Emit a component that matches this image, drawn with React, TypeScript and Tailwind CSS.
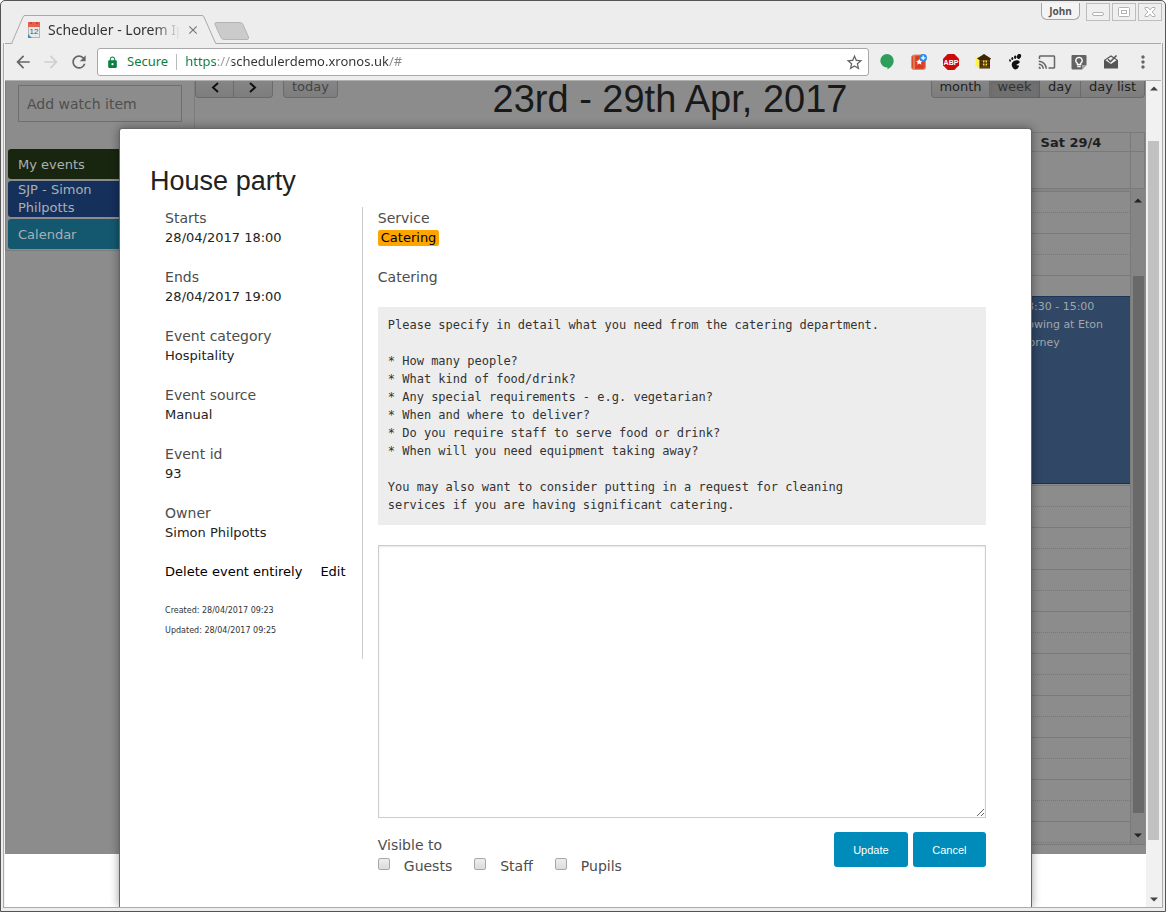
import type { ReactNode } from 'react';
import {
  MdArrowBack,
  MdArrowForward,
  MdCast,
  MdClose,
  MdLock,
  MdMoreVert,
  MdRefresh,
  MdStarBorder,
} from 'react-icons/md';

const CHROME_FONT = "font-['Noto_Sans',sans-serif]";
const BODY_FONT = "font-['DejaVu_Sans',sans-serif]";
const HEADING_FONT = "font-['Liberation_Sans',sans-serif]";

function CalendarFavicon() {
  return (
    <svg width="12" height="16" viewBox="0 0 12 16" aria-hidden="true">
      <rect x="0.5" y="0.5" width="11" height="15" fill="#e9e9e9" stroke="#b5b5b5" />
      <rect x="0" y="0" width="12" height="5" fill="#e8604c" />
      <path d="M3 0v2M9 0v2" stroke="#8f3a30" />
      <path d="M0 12l4 4H0z" fill="#3c8fb8" />
      <text x="6" y="12" fontSize="8" textAnchor="middle" fill="#555" fontFamily="Liberation Sans">
        12
      </text>
    </svg>
  );
}

function WindowButton({ label, children }: { label: string; children: ReactNode }) {
  return (
    <button aria-label={label} className="flex h-[18px] w-6 items-center justify-center border border-[#bdbdbd] bg-[#efefef]">
      <svg width="14" height="12" viewBox="0 0 14 12" fill="#fff" stroke="#b3b3b3" aria-hidden="true">
        {children}
      </svg>
    </button>
  );
}

function TitleBar() {
  return (
    <header className={`relative z-10 flex h-[42px] items-end pl-[9px] ${CHROME_FONT}`}>
      <div className="relative -mb-px flex h-[29px] w-[208px] items-center pl-[18px] text-sm text-[#333]">
        <svg className="absolute inset-0" width="208" height="29" viewBox="0 0 208 29" aria-hidden="true">
          <path
            d="M0 28.500Q1.500 28.500 2 27.500L13 2Q13.600 .5 15 .5H192Q193.500 .5 194 2L205 27Q205.700 28.500 207 28.500H208"
            fill="#eeeeee"
            stroke="#a9a9a9"
          />
          <path d="M3 28.500H205" stroke="#eeeeee" />
        </svg>
        <div className="relative flex w-full items-center">
          <CalendarFavicon />
          <span className="ml-2 w-[132px] overflow-hidden whitespace-nowrap [mask-image:linear-gradient(90deg,#000_80%,transparent)]">
            Scheduler - Lorem Ipsum
          </span>
          <button aria-label="Close tab" className="ml-1.5 text-[#777]">
            <MdClose size={14} />
          </button>
        </div>
      </div>
      <button aria-label="New tab" className="mb-[3px] -ml-1 self-end">
        <svg width="36" height="18" viewBox="0 0 36 18" aria-hidden="true">
          <path d="M2.500 .5H26Q28 .5 29 2.500L34.500 15Q35 17.500 33 17.500H10Q8 17.500 7 15.500L1 2.500Q.5 .5 2.500 .5Z" fill="#cbcbcb" stroke="#b4b4b4" />
        </svg>
      </button>
      <div className="ml-auto flex gap-[2px] self-start pt-[2px] pr-[3px]">
        <button className="mr-1 h-[17px] w-[39px] rounded-b-md border border-t-0 border-[#a5a5a5] bg-[#f4f4f4] text-[10px] leading-4 font-bold text-[#555]">
          John
        </button>
        <WindowButton label="Minimize">
          <rect x="1.500" y="6.500" width="11" height="3" rx="1.500" />
        </WindowButton>
        <WindowButton label="Maximize">
          <rect x="1.500" y="1.500" width="11" height="9" rx="1" />
          <rect x="4.500" y="4.500" width="5" height="3" />
        </WindowButton>
        <WindowButton label="Close">
          <path d="M2 1.500H5L7 4 9 1.500H12V3L9 6 12 9V10.500H9L7 8 5 10.500H2V9L5 6 2 3Z" />
        </WindowButton>
      </div>
    </header>
  );
}

function HangoutsIcon() {
  return (
    <svg width="16" height="18" viewBox="0 0 16 18" aria-hidden="true">
      <path d="M8 1a6.700 6.700 0 0 1 6.700 6.700C14.700 11.500 12 14 8.500 16.500V14.400H8A6.700 6.700 0 1 1 8 1Z" fill="#2f9e5b" />
    </svg>
  );
}

function BookmarkIcon() {
  return (
    <svg width="16" height="16" viewBox="0 0 16 16" aria-hidden="true">
      <rect x="0.500" y="1" width="14" height="14.500" rx="2.500" fill="#d9492c" stroke="#e88a63" />
      <path d="M3 1v14" stroke="#f0a183" />
      <rect x="5" y="2.500" width="7" height="11.500" fill="#d93a22" />
      <path d="M8.300 4.500l1 2.200 2.400.2-1.800 1.600.6 2.300-2.200-1.200-2.100 1.200.5-2.300L5 6.900l2.300-.2z" fill="#fff" />
      <circle cx="12.200" cy="3.800" r="3.800" fill="#2b87e8" />
      <path d="M12.200 1.500v4.600M9.900 3.800h4.600" stroke="#fff" strokeWidth="1.300" />
    </svg>
  );
}

function AdblockIcon() {
  return (
    <svg width="16" height="16" viewBox="0 0 16 16" aria-hidden="true">
      <path d="M4.700 0h6.600L16 4.700v6.600L11.300 16H4.700L0 11.300V4.700z" fill="#cc0a0a" />
      <text x="8" y="10.800" fontSize="7" fontWeight="700" textAnchor="middle" fill="#fff" fontFamily="Liberation Sans">
        ABP
      </text>
    </svg>
  );
}

function HouseIcon() {
  return (
    <svg width="16" height="16" viewBox="0 0 16 16" aria-hidden="true">
      <path d="M0 3l2 1 1-2 2 3v8l-3 1v-2l-2 1 1-4-1-2 1.500-1z" fill="#fff04a" />
      <path d="M9 0L2 4.500 4.500 6V14.500H15V6l1-1.500Z" fill="#3d2605" />
      <path d="M5.500 7h9M5.500 10h9M5.500 13h9" stroke="#8a5a14" />
      <rect x="8" y="6.500" width="4" height="5" fill="#f5e02c" />
      <path d="M10 6.500v5M8 9h4" stroke="#3d2605" />
    </svg>
  );
}

function GnomeIcon() {
  return (
    <svg width="14" height="16" viewBox="0 0 14 16" fill="#111" aria-hidden="true">
      <ellipse cx="11" cy="2.400" rx="2" ry="2.600" transform="rotate(25 11 2.400)" />
      <ellipse cx="7.200" cy="3.200" rx="1.200" ry="1.700" transform="rotate(10 7.200 3.200)" />
      <ellipse cx="4.300" cy="4.500" rx="1" ry="1.500" />
      <ellipse cx="2" cy="6.500" rx=".9" ry="1.300" transform="rotate(-15 2 6.500)" />
      <path d="M8.500 6.200C12 5.800 12.500 8.500 10.500 9.600 9 10.400 8 10.600 9 11.500c1.500-.8 2.500.2 1.500 1.800C8.800 16.500 5.500 15.800 4.200 12.800 2.800 9.500 4.500 6.600 8.500 6.200Z" />
    </svg>
  );
}

function KeepIcon() {
  return (
    <svg width="16" height="16" viewBox="0 0 16 16" aria-hidden="true">
      <path d="M1.500 1h13Q15.500 1 15.500 2v9l-4.500 4.500H1.500Q.5 15.500 .5 14.500V2Q.5 1 1.500 1Z" fill="#636363" />
      <path d="M15.500 11H11v4.500z" fill="#a3a3a3" />
      <path d="M8 3.300a3.200 3.200 0 0 1 1.700 5.900V10.500H6.300V9.200A3.200 3.200 0 0 1 8 3.300Z" fill="none" stroke="#fff" strokeWidth="1.300" />
      <path d="M6.300 12.500h3.400" stroke="#fff" strokeWidth="1.300" />
    </svg>
  );
}

function InboxIcon() {
  return (
    <svg width="16" height="16" viewBox="0 0 16 16" aria-hidden="true">
      <path d="M1 6L8 1.200 15 6v8.500H1z" fill="#555" />
      <path d="M2.500 6.200L8 2.800 13.500 6.200 8 10z" fill="#eee" />
      <path d="M5 5.300l2.400 2.400L13.500 1.500" fill="none" stroke="#555" strokeWidth="1.600" />
    </svg>
  );
}

const EXTENSIONS: { label: string; icon: ReactNode }[] = [
  { label: 'Hangouts', icon: <HangoutsIcon /> },
  { label: 'Save bookmark', icon: <BookmarkIcon /> },
  { label: 'Adblock Plus', icon: <AdblockIcon /> },
  { label: 'Home', icon: <HouseIcon /> },
  { label: 'GNOME Shell integration', icon: <GnomeIcon /> },
  { label: 'Cast', icon: <MdCast size={18} /> },
  { label: 'Keep', icon: <KeepIcon /> },
  { label: 'Inbox', icon: <InboxIcon /> },
  { label: 'Menu', icon: <MdMoreVert size={20} /> },
];

function Toolbar() {
  return (
    <nav className={`flex h-[38px] items-center border-t border-b border-t-[#a9a9a9] border-b-[#b0b0b0] bg-[#eeeeee] pr-[2px] pl-1 text-[#666] ${CHROME_FONT}`}>
      <button aria-label="Back" className="flex w-7 justify-center">
        <MdArrowBack size={20} />
      </button>
      <button aria-label="Forward" className="flex w-7 justify-center text-[#cfcfcf]">
        <MdArrowForward size={20} />
      </button>
      <button aria-label="Reload" className="flex w-7 justify-center">
        <MdRefresh size={20} />
      </button>
      <div className="ml-1 flex h-7 flex-1 items-center rounded-[3px] border border-[#a8a8a8] bg-white pl-2 text-[13px]">
        <MdLock size={13} className="text-[#0b8043]" />
        <span className="ml-2 text-[#0b8043]">Secure</span>
        <span className="mx-2 h-4 w-px bg-[#bbb]" />
        <input
          aria-label="Address"
          defaultValue="https://schedulerdemo.xronos.uk/#"
          className="min-w-0 flex-1 bg-[linear-gradient(90deg,#0b8043_0_32px,#999_32px_47px,#333_47px_203px,#888_203px)] bg-clip-text text-transparent caret-black outline-none"
        />
        <button aria-label="Bookmark this page" className="mr-1">
          <MdStarBorder size={19} />
        </button>
      </div>
      <div className="ml-[2px] flex">
        {EXTENSIONS.map(({ label, icon }) => (
          <button key={label} aria-label={label} className="flex h-7 w-8 items-center justify-center">
            {icon}
          </button>
        ))}
      </div>
    </nav>
  );
}

function Sidebar() {
  return (
    <aside className="h-[170px] w-[189px] shrink-0 border-b border-l border-[#7c7c7c] px-[2px] text-[13px] leading-[18px] text-[#a9b0b3]">
      <input
        aria-label="Add watch item"
        placeholder="Add watch item"
        className="mt-1 ml-[10px] h-[37px] w-[164px] border border-[#6e6e6e] bg-transparent px-2 text-sm placeholder:text-[#4f4f4f]"
      />
      <ul className="mt-[27px] flex flex-col gap-[2px]">
        <li className="rounded-[3px] bg-[#18260f] px-[10px] pt-[7px] pb-[5px]">My events</li>
        <li className="rounded-[3px] bg-[#16305c] px-[10px]">
          SJP - Simon
          <br />
          Philpotts
        </li>
        <li className="rounded-[3px] bg-[#14586f] px-[10px] pt-[7px] pb-[5px]">Calendar</li>
      </ul>
    </aside>
  );
}

const BUTTON = 'h-[17px] border-b border-[#6b6b6b] bg-[linear-gradient(#858585,#7d7d7d)] text-[13px] leading-3 pb-1 text-[#1f1f1f]';

function Chevron({ d }: { d: string }) {
  return (
    <svg className="mx-auto" width="10" height="12" viewBox="0 0 10 12" fill="none" stroke="#111" strokeWidth="2" aria-hidden="true">
      <path d={d} />
    </svg>
  );
}

function CalendarHeader() {
  return (
    <div className="flex h-[51px] items-start">
      <div className="flex flex-1">
        <button aria-label="Previous" className={`${BUTTON} w-[39px] rounded-bl border-r border-l`}>
          <Chevron d="M8 2L3 6.500 8 11" />
        </button>
        <button aria-label="Next" className={`${BUTTON} w-[39px] rounded-br border-r`}>
          <Chevron d="M2 2L7 6.500 2 11" />
        </button>
        <button className={`${BUTTON} ml-[10px] w-[55px] rounded-b border-x text-[#444]`}>today</button>
      </div>
      <h1 className={`text-[38px] leading-9 whitespace-nowrap text-[#191919] ${HEADING_FONT}`}>23rd - 29th Apr, 2017</h1>
      <div className="flex flex-1 justify-end">
        <button className={`${BUTTON} w-[59px] rounded-bl border-x`}>month</button>
        <button className="h-[17px] w-[50px] border-r border-b border-[#606060] bg-[#707070] pb-1 text-[13px] leading-3 text-[#333] shadow-inner">
          week
        </button>
        <button className={`${BUTTON} w-[41px] border-r`}>day</button>
        <button className={`${BUTTON} w-[64px] rounded-br border-r`}>day list</button>
      </div>
    </div>
  );
}

function Arrow({ up, color }: { up?: boolean; color: string }) {
  return (
    <svg width="8" height="5" viewBox="0 0 8 5" fill={color} aria-hidden="true">
      <path d={up ? 'M4 .5L8 4.500H0Z' : 'M0 .5H8L4 4.500Z'} />
    </svg>
  );
}

const SLOTS = Array.from({ length: 32 }, (_, i) => i);

function Calendar() {
  return (
    <section className="min-w-0 flex-1 border-l border-[#7c7c7c] pr-px">
      <CalendarHeader />
      <div className="border border-[#7a7a7a]">
        <div className="flex h-[19px] border-b border-[#7a7a7a] text-[13px] leading-[19px] font-bold text-[#1f1f1f]">
          <span className="ml-auto w-[118px] text-center">Sat 29/4</span>
          <span className="w-[14px] border-l border-[#7a7a7a]" />
        </div>
        <div className="flex h-9 justify-end">
          <span className="w-[14px] border-l border-[#7a7a7a]" />
        </div>
      </div>
      <div className="h-[2px] bg-[#858585]" />
      <div className="flex h-[654px] border-b border-l border-[#7a7a7a]">
        <div className="relative flex-1 overflow-hidden border-r border-[#7a7a7a]">
          {SLOTS.map((i) => (
            <div key={i} className={i % 2 ? 'h-[21px] border-t border-dotted border-[#777]' : 'h-[21px] border-t border-[#7a7a7a]'} />
          ))}
          <div className="absolute top-[105px] right-0 h-[188px] w-[118px] border-y border-t-[#1c3558] border-b-[#17305a] bg-[#304765] pt-px pl-2 text-[11px] leading-[18px] text-[#a2a6ab]">
            13:30 - 15:00
            <br />
            Rowing at Eton
            <br />
            Dorney
          </div>
        </div>
        <div className="flex w-[14px] flex-col items-center bg-[#858585]">
          <span className="flex h-[18px] items-center"><Arrow up color="#222" /></span>
          <span className="mt-[67px] w-[11px] flex-1 bg-[#696969]" />
          <span className="mt-[14px] flex h-[17px] items-center"><Arrow color="#222" /></span>
        </div>
      </div>
      <div className="h-[9px]" />
    </section>
  );
}

const DETAILS = [
  ['Starts', '28/04/2017 18:00'],
  ['Ends', '28/04/2017 19:00'],
  ['Event category', 'Hospitality'],
  ['Event source', 'Manual'],
  ['Event id', '93'],
  ['Owner', 'Simon Philpotts'],
];

const CATERING_NOTES = `Please specify in detail what you need from the catering department.

* How many people?
* What kind of food/drink?
* Any special requirements - e.g. vegetarian?
* When and where to deliver?
* Do you require staff to serve food or drink?
* When will you need equipment taking away?

You may also want to consider putting in a request for cleaning
services if you are having significant catering.`;

function EventDialog() {
  return (
    <div
      role="dialog"
      aria-labelledby="event-title"
      className="absolute inset-x-0 top-[47px] bottom-0 mx-auto w-4/5 rounded-t-[3px] border border-b-0 border-[#666] bg-white px-[30px] pt-8 shadow-[0_0_10px_rgba(0,0,0,0.4)]"
    >
      <h2 id="event-title" className={`mb-[6px] text-[27px] leading-10 text-[#222] ${HEADING_FONT}`}>
        House party
      </h2>
      <div className="flex items-start">
        <div className="h-[452px] w-1/4 border-r border-[#ccc] pt-px pl-[15px]">
          <dl className="text-[13px] leading-5 text-[#222]">
            {DETAILS.map(([label, value]) => (
              <div key={label} className="mb-[19px]">
                <dt className="text-sm leading-5 text-[#4d4d4d]">{label}</dt>
                <dd>{value}</dd>
              </div>
            ))}
          </dl>
          <div className="flex gap-[18px] text-[13px] leading-5 whitespace-nowrap text-black">
            <a href="#delete">Delete event entirely</a>
            <a href="#edit">Edit</a>
          </div>
          <div className="mt-[19px] text-[8px] leading-5 text-[#333]">
            <p>Created: 28/04/2017 09:23</p>
            <p>Updated: 28/04/2017 09:25</p>
          </div>
        </div>
        <form className="w-3/4 px-[15px] pt-px text-sm leading-5 text-[#4d4d4d]" onSubmit={(e) => e.preventDefault()}>
          <p>Service</p>
          <p className="flex h-5 items-center">
            <span className="rounded-[2px] bg-[#ffa500] px-[3px] text-[13px] leading-4 text-black">Catering</span>
          </p>
          <label htmlFor="catering" className="mt-[19px] block">
            Catering
          </label>
          <pre className="mt-5 bg-[#ededed] px-[10px] pt-[9px] pb-[11px] font-['DejaVu_Sans_Mono',monospace] text-[12px] leading-[18px] text-[#333]">
            {CATERING_NOTES}
          </pre>
          <textarea id="catering" className="mt-5 block h-[273px] w-full resize-y border border-[#ccc] bg-white shadow-[inset_0_1px_2px_rgba(0,0,0,0.1)]" />
          <div className="mt-[14px] flex items-start justify-between">
            <fieldset>
              <legend className="pt-[3px]">Visible to</legend>
              <div className="flex gap-[22px]">
                {['Guests', 'Staff', 'Pupils'].map((group) => (
                  <label key={group} className="flex items-center leading-[22px]">
                    <input
                      type="checkbox"
                      className="mr-[14px] mb-1 size-3 appearance-none rounded-[2px] border border-[#a8a8a8] bg-[linear-gradient(#ededed,#dcdcdc)] checked:bg-[#008cba]"
                    />
                    {group}
                  </label>
                ))}
              </div>
            </fieldset>
            <div className={`flex gap-[5px] text-[11px] text-white ${HEADING_FONT}`}>
              <button className="h-[35px] w-[74px] rounded-[3px] bg-[#008cba]">Update</button>
              <button type="button" className="h-[35px] w-[73px] rounded-[3px] bg-[#008cba]">
                Cancel
              </button>
            </div>
          </div>
        </form>
      </div>
    </div>
  );
}

function PageScrollbar() {
  return (
    <div className="flex w-[15px] flex-col items-center bg-[#f1f1f1]">
      <span className="flex h-[15px] items-center"><Arrow up color="#444" /></span>
      <span className="mt-[45px] w-[11px] flex-1 bg-[#c1c1c1]" />
      <span className="mt-[52px] flex h-[15px] items-center"><Arrow color="#444" /></span>
    </div>
  );
}

export default function App() {
  return (
    <div className="flex h-screen flex-col overflow-hidden rounded-t-[5px] border border-[#555] bg-[#ededed]">
      <TitleBar />
      <div className="mx-[2px] mb-[3px] flex min-h-0 flex-1 flex-col border border-t-0 border-[#aaa] bg-[#f3f1f1] px-px">
        <Toolbar />
        <div className={`flex min-h-0 flex-1 ${BODY_FONT}`}>
          <main className="relative min-w-0 flex-1 overflow-hidden bg-white">
            <div className="flex bg-[#8c8c8c]">
              <Sidebar />
              <Calendar />
            </div>
            <EventDialog />
          </main>
          <PageScrollbar />
        </div>
      </div>
    </div>
  );
}
